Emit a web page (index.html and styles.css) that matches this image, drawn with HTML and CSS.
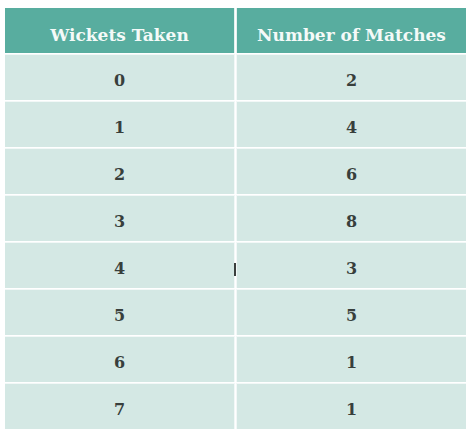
FILE: index.html
```html
<!DOCTYPE html>
<html lang="en">
<head>
<meta charset="utf-8">
<title>Wickets Taken</title>
<link rel="stylesheet" href="styles.css">
</head>
<body>
<div class="wrap">
  <table class="data">
    <thead>
      <tr><th>Wickets Taken</th><th>Number of Matches</th></tr>
    </thead>
    <tbody>
      <tr><td>0</td><td>2</td></tr>
      <tr><td>1</td><td>4</td></tr>
      <tr><td>2</td><td>6</td></tr>
      <tr><td>3</td><td>8</td></tr>
      <tr><td class="mark-cell">4<span class="mark"></span></td><td>3</td></tr>
      <tr><td>5</td><td>5</td></tr>
      <tr><td>6</td><td>1</td></tr>
      <tr><td>7</td><td>1</td></tr>
    </tbody>
  </table>
</div>
</body>
</html>
```
FILE: styles.css
```css
html, body {
  margin: 0;
  padding: 0;
  background: #ffffff;
}
.wrap {
  padding: 7px 5px 0 4px;
}
.data {
  border-collapse: separate;
  border-spacing: 1px;
  width: 463px;
  table-layout: fixed;
  font-family: "DejaVu Serif", "Liberation Serif", serif;
  color: #383f3c;
}
.data th {
  background: #58ad9f;
  color: #f4faf8;
  font-weight: bold;
  font-size: 17px;
  height: 45px;
  padding: 8px 0 0 0;
  box-sizing: border-box;
  border-right: 1px solid #e6f2ef;
}
.data th:last-child { border-right: none; border-left: 1px solid #e6f2ef; }
.data td {
  background: #d4e8e4;
  text-align: center;
  font-size: 16px;
  font-weight: bold;
  height: 46px;
  padding: 5px 0 0 0;
  box-sizing: border-box;
  border-top: 1px solid #f2f8f7;
}
.data td:first-child { border-right: 1px solid #f2f8f7; }
.data td:last-child { border-left: 1px solid #f2f8f7; }
.mark-cell { position: relative; }
.mark {
  position: absolute;
  right: -2px;
  top: 20px;
  width: 2px;
  height: 13px;
  background: #3a3f3d;
}
```
